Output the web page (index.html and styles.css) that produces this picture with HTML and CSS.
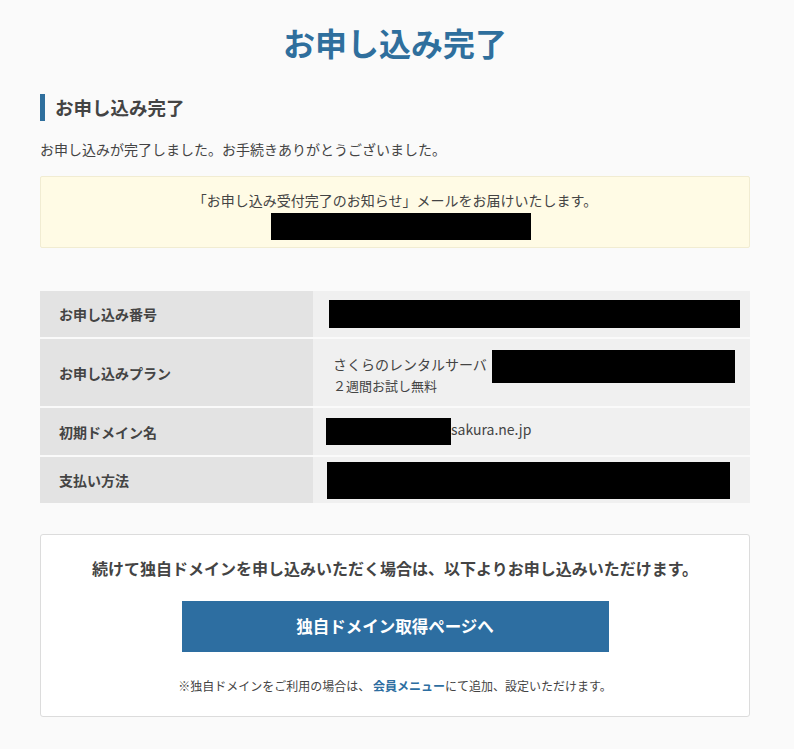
FILE: index.html
```html
<!DOCTYPE html>
<html lang="ja">
<head>
    <meta charset="utf-8">
    <title>お申し込み完了</title>
    <link rel="stylesheet" href="styles.css">
</head>
<body>
    <div class="container">
        <h1 class="page-title">お申し込み完了</h1>

        <h2 class="section-title">お申し込み完了</h2>
        <p class="lead">お申し込みが完了しました。お手続きありがとうございました。</p>

        <div class="notice">
            <p>「お申し込み受付完了のお知らせ」メールをお届けいたします。</p>
            <span class="redact notice-mail"></span>
        </div>

        <table class="summary">
            <tr class="row-number">
                <th>お申し込み番号</th>
                <td><span class="redact r-number"></span></td>
            </tr>
            <tr class="row-plan">
                <th>お申し込みプラン</th>
                <td>
                    <div class="plan-line">さくらのレンタルサーバ <span class="redact r-plan"></span></div>
                    <div class="plan-sub">２週間お試し無料</div>
                </td>
            </tr>
            <tr class="row-domain">
                <th>初期ドメイン名</th>
                <td class="domain-cell"><span class="redact r-domain"></span>sakura.ne.jp</td>
            </tr>
            <tr class="row-pay">
                <th>支払い方法</th>
                <td class="pay-cell"><span class="redact r-pay"></span></td>
            </tr>
        </table>

        <div class="domain-box">
            <p class="domain-lead">続けて独自ドメインを申し込みいただく場合は、以下よりお申し込みいただけます。</p>
            <a class="domain-button" href="#">独自ドメイン取得ページへ</a>
            <p class="domain-note">※独自ドメインをご利用の場合は、 <a href="#">会員メニュー</a>にて追加、設定いただけます。</p>
        </div>
    </div>
</body>
</html>
```

FILE: styles.css
```css
html, body {
    margin: 0;
    background: #fafafa;
    color: #444;
    font-family: "Noto Sans CJK JP", "Noto Sans", sans-serif;
}

.container {
    width: 710px;
    margin-left: 40px;
    padding: 20px 0 32px;
}

.page-title {
    margin: 0;
    text-align: center;
    font-size: 32px;
    line-height: 44px;
    color: #2f6f9d;
    font-weight: bold;
}

.section-title {
    margin: 30px 0 0;
    padding-left: 10px;
    border-left: 5px solid #2f6f9d;
    font-size: 18.5px;
    line-height: 27px;
    color: #444;
}

.lead {
    margin: 18px 0 0;
    font-size: 14px;
    line-height: 20px;
}

.notice {
    margin-top: 17px;
    background: #fffbe5;
    border: 1px solid #f1ecd2;
    border-radius: 2px;
    text-align: center;
    padding: 13px 0 7px;
}

.notice p {
    margin: 0;
    font-size: 14px;
    line-height: 20px;
}

.redact {
    display: inline-block;
    background: #000;
    vertical-align: middle;
}

.notice-mail {
    width: 260px;
    height: 27px;
    margin-top: 3px;
    margin-left: 12px;
}

.summary {
    width: 100%;
    margin-top: 43px;
    border-collapse: collapse;
    font-size: 14px;
}

.summary th,
.summary td {
    border-bottom: 2px solid #fafafa;
    text-align: left;
    padding: 0;
}

.summary tr:last-child th,
.summary tr:last-child td {
    border-bottom: none;
}

.summary th {
    width: 254px;
    padding-left: 19px;
    background: #e3e3e3;
    font-weight: bold;
    color: #444;
}

.summary td {
    background: #f0f0f0;
    padding-left: 16px;
}

.row-number th, .row-number td { height: 46px; }
.row-plan th, .row-plan td { height: 67px; }
.row-domain th, .row-domain td { height: 47px; }
.row-pay th, .row-pay td { height: 46px; }

.r-number {
    width: 411px;
    height: 28px;
}

.plan-line {
    padding-left: 4px;
    line-height: 20px;
}

.r-plan {
    width: 243px;
    height: 33px;
    margin-left: 2px;
}

.plan-sub {
    margin-top: -6px;
    padding-left: 4px;
    line-height: 18px;
    font-size: 13px;
}

.summary .domain-cell {
    padding-left: 13px;
}

.r-domain {
    width: 125px;
    height: 27px;
}

.summary .pay-cell {
    padding-left: 14px;
}

.r-pay {
    width: 403px;
    height: 37px;
}

.domain-box {
    margin-top: 31px;
    background: #fff;
    border: 1px solid #dcdcdc;
    border-radius: 3px;
    text-align: center;
    padding: 22px 0 22px;
}

.domain-lead {
    margin: 0;
    font-size: 16px;
    line-height: 22px;
    font-weight: bold;
    color: #444;
}

.domain-button {
    display: block;
    width: 427px;
    height: 51px;
    line-height: 51px;
    margin: 22px auto 0;
    background: #2d6ea1;
    color: #fff;
    font-size: 16.5px;
    font-weight: bold;
    text-decoration: none;
}

.domain-note {
    margin: 26px 0 0;
    font-size: 12px;
    line-height: 16px;
}

.domain-note a {
    color: #2d6ea1;
    font-weight: bold;
    text-decoration: none;
}
```
